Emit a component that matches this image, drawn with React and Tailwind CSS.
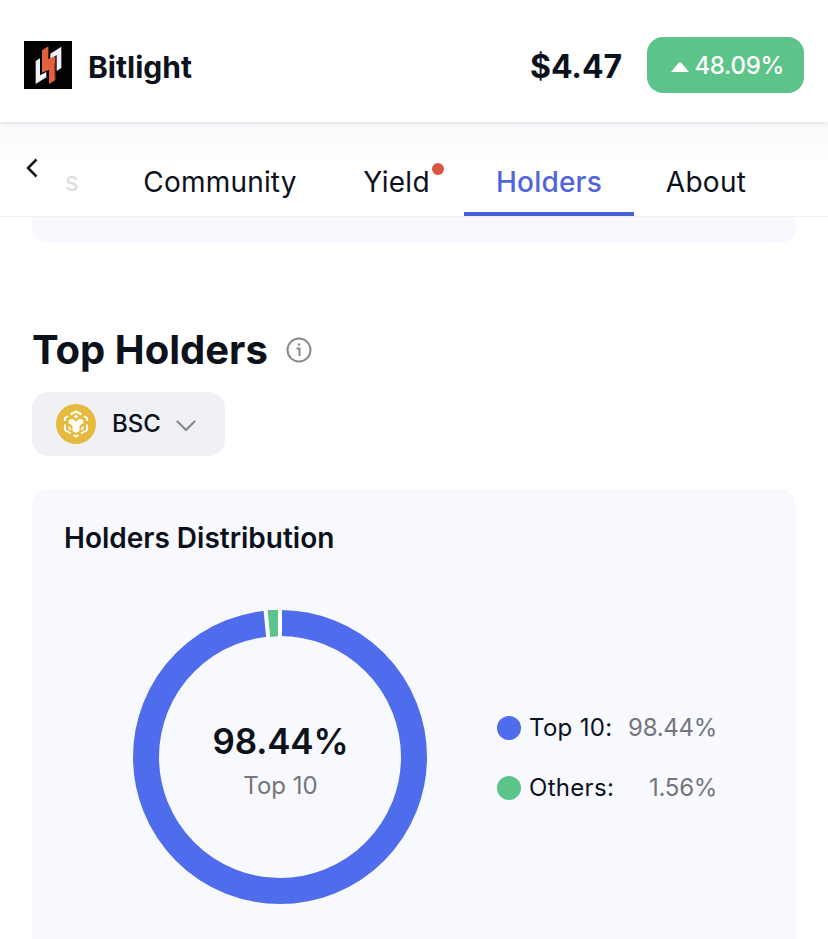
import { clsx } from 'clsx';

const tabs = [
  { label: 'Community', className: 'ml-[65px] w-[152px] tracking-[0.2px]' },
  { label: 'Yield', className: 'ml-[67px] w-[67px] tracking-[0.3px]', dot: true },
  { label: 'Holders', className: 'ml-[34px] w-[170px] tracking-[0.2px]', active: true },
  { label: 'About', className: 'ml-[32px] w-[80px] tracking-[0.3px]' },
];

const legend = [
  { label: 'Top 10:', value: '98.44%', color: 'bg-[#4f6ced]' },
  { label: 'Others:', value: '1.56%', color: 'bg-[#5cc389]' },
];

const BitlightLogo = () => (
  <svg viewBox="0 0 144 144" className="size-12">
    <rect width="144" height="144" fill="#020203" />
    <path d="M35 60L48 52V103L67 93V109L35 129Z" fill="#f1f1f5" />
    <path d="M79 38L112 17V81L98 90V42L79 54Z" fill="#f1f1f5" />
    <path d="M54 28L73 16V54L94 45V117L75 130V86L54 95Z" fill="#e2603c" />
    <path d="M92 68V115" stroke="#5a1d10" strokeWidth="3" strokeDasharray="3 3" />
  </svg>
);

const BscIcon = () => (
  <svg viewBox="0 0 40 40" className="size-10">
    <circle cx="20" cy="20" r="20" fill="#e6b93f" />
    <g fill="none" stroke="#fffdf3" strokeWidth="2">
      <path d="M14.500 10.500L20 7.500L25.500 10.500" />
      <path d="M9 17V14L12 12.200M31 17V14L28 12.200" />
      <path d="M9 20.500V26L15 29.500M31 20.500V26L25 29.500" />
      <path d="M17.500 31L20 32.500L22.500 31" />
    </g>
    <path d="M20 10.500L22.500 12.500L20 14.500L17.500 12.500Z" fill="#fffdf3" />
    <path
      d="M13 15.500L17 15L20 17.500L23 15L27 15.500L27.500 19L23.500 22V27L20 29L16.500 27V22L12.500 19Z"
      fill="#fffdf3"
    />
    <path d="M12.500 21.500L15 24V26.500L12.500 25ZM27.500 21.500L25 24V26.500L27.500 25Z" fill="#fffdf3" />
  </svg>
);

// Ring split in two slices with light separators between them
const DonutChart = () => {
  const r = 134;
  const length = 2 * Math.PI * r;
  const others = length * 0.0156;

  return (
    <svg viewBox="0 0 294 294" className="size-[294px]">
      <g fill="none" strokeWidth="26">
        <circle cx="147" cy="147" r={r} stroke="#4f6ced" />
        <circle
          cx="147"
          cy="147"
          r={r}
          stroke="#5cc389"
          strokeDasharray={`${others} ${length}`}
          transform="rotate(-95.616 147 147)"
        />
      </g>
      <path d="M147 -1V28" stroke="#fff" strokeWidth="4" />
      <path d="M147 -1V28" stroke="#fff" strokeWidth="4" transform="rotate(-5.616 147 147)" />
    </svg>
  );
};

const Header = () => (
  <header className="relative z-10 flex h-[122px] items-center bg-white px-6 pt-2 shadow-[0_1px_5px_rgba(20,30,50,0.13)]">
    <div className="flex w-full items-center">
      <BitlightLogo />
      <h1 className="ml-4 pt-1 text-[30px] font-bold">Bitlight</h1>
      <span className="ml-auto pt-[3px] text-[32px] font-bold tracking-[-0.1px]">$4.47</span>
      <div className="ml-[25px] flex h-14 w-[157px] items-center justify-end rounded-2xl bg-[#5cc389] pt-px pr-5 text-2xl font-medium tracking-[-0.3px] text-white">
        <svg viewBox="0 0 18 10" className="mt-0.5 mr-[5px] h-2.5 w-[18px]">
          <path d="M0 10L7.500 1Q9 -0.500 10.500 1L18 10Z" fill="currentColor" />
        </svg>
        48.09%
      </div>
    </div>
  </header>
);

const TabBar = () => (
  <nav className="flex h-[95px] border-b border-[#f0f1f4] bg-linear-to-b from-[#f9fafc] to-white to-50%">
    <svg viewBox="0 0 12 20" className="mt-[36px] ml-[26px] h-5 w-3" fill="none">
      <path d="M10.500 1.500L2 10L10.500 18.500" stroke="#0d111c" strokeWidth="2.500" />
    </svg>
    <span className="ml-[27px] w-[14px] pt-[42px] text-[26px] leading-9 text-[#dcdde1]">s</span>
    {tabs.map((tab) => (
      <div
        key={tab.label}
        className={clsx(
          'relative flex justify-center whitespace-nowrap pt-[42px] text-[28px] leading-9',
          tab.className,
          tab.active && 'border-b-4 border-[#4660d8] font-medium text-[#5064dd]',
        )}
      >
        {tab.label}
        {tab.dot && <span className="absolute top-[41px] -right-[14px] size-3 rounded-full bg-[#d9573d]" />}
      </div>
    ))}
  </nav>
);

const App = () => (
  <div className="h-[939px] w-[828px] overflow-hidden bg-white font-[Inter,sans-serif] text-[#0d111c]">
    <Header />
    <TabBar />
    <main className="px-8">
      <div className="h-[26px] rounded-b-2xl bg-[#f7f9fe]" />

      {/* Section title */}
      <div className="mt-[83px] flex h-12 items-center">
        <h2 className="text-[40px] font-bold">Top Holders</h2>
        <svg viewBox="0 0 26 26" className="ml-[18px] size-[26px]" fill="none" stroke="#87898f">
          <circle cx="13" cy="13" r="11.500" strokeWidth="2" />
          <path d="M10.500 11.500H13.500V19" strokeWidth="2" />
          <circle cx="13" cy="7.500" r="1.300" fill="#87898f" stroke="none" />
        </svg>
      </div>

      {/* Network selector */}
      <button className="mt-[18px] flex h-16 w-[193px] items-center rounded-2xl bg-[#eff1f5] px-6 text-2xl font-medium">
        <BscIcon />
        <span className="ml-4">BSC</span>
        <svg viewBox="0 0 20 12" className="mt-1 ml-[15px] h-3 w-5" fill="none">
          <path d="M1.500 1.500L10 10L18.500 1.500" stroke="#858790" strokeWidth="2.200" strokeLinecap="round" />
        </svg>
      </button>

      {/* Distribution card */}
      <section className="mt-[33px] h-[500px] rounded-2xl bg-[#f7f9fe] px-8 pt-[31px]">
        <h3 className="text-[28px] leading-9 font-semibold">Holders Distribution</h3>
        <div className="mt-[54px] ml-[69px] flex items-center">
          <div className="grid place-items-center *:col-start-1 *:row-start-1">
            <DonutChart />
            <div className="pt-[7px] pl-px text-center">
              <div className="text-[35px] leading-[46px] font-semibold tracking-[-0.2px]">98.44%</div>
              <div className="mt-1 text-2xl leading-9 text-[#74767c]">Top 10</div>
            </div>
          </div>
          <ul className="mt-0.5 ml-[70px] w-[219px] space-y-6">
            {legend.map((item) => (
              <li key={item.label} className="flex h-9 items-center text-2xl tracking-[0.3px]">
                <span className={clsx('mr-2 size-6 rounded-full', item.color)} />
                {item.label}
                <span className="-mr-px ml-auto tracking-[-0.3px] text-[#74767c]">{item.value}</span>
              </li>
            ))}
          </ul>
        </div>
      </section>
    </main>
  </div>
);

export default App;
